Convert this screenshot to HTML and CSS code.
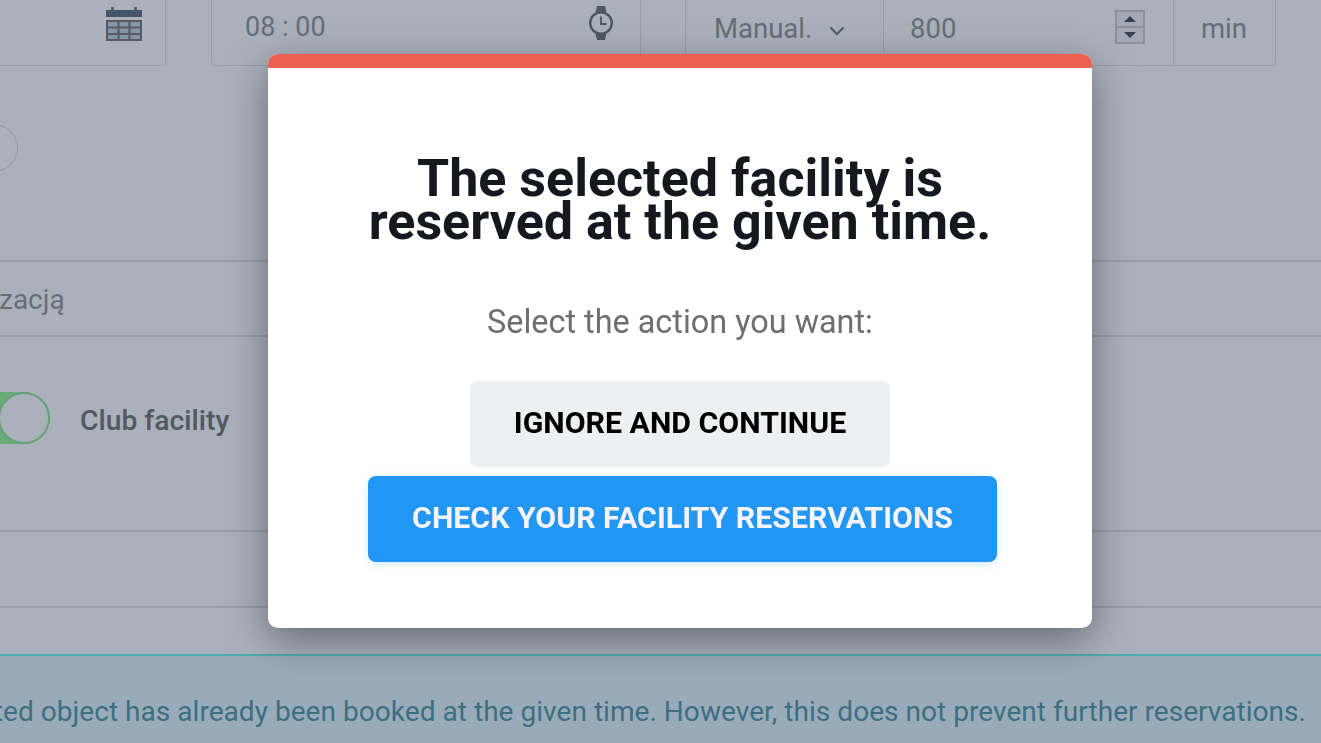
FILE: index.html
```html
<!DOCTYPE html>
<html lang="en">
<head>
<meta charset="utf-8">
<title>Facility reservation</title>
<link rel="stylesheet" href="styles.css">
</head>
<body>
<div class="page">
  <div class="toprow">
    <div class="field date-field">
      <svg class="icon-cal" viewBox="0 0 36 34" width="36" height="34" aria-hidden="true">
        <rect x="5" y="0" width="3" height="6" fill="#7a6a5e"/>
        <rect x="28" y="0" width="3" height="6" fill="#7a6a5e"/>
        <rect x="0" y="3" width="36" height="7" fill="#48596a"/>
        <path d="M1 14h34v19H1z" fill="#b9cfe0" stroke="#6b6560" stroke-width="2"/>
        <path d="M1 20.5h34M1 27h34M12.5 14v19M23.5 14v19" stroke="#6b6560" stroke-width="2.2" fill="none"/>
      </svg>
    </div>
    <div class="field group">
      <div class="cell time-cell">
        <span>08 : 00</span>
        <svg class="icon-watch" viewBox="0 0 26 36" width="26" height="36" aria-hidden="true">
          <path d="M7.5 7.2L9 1h8l1.500 6.200zM7.500 28.800L9 35h8l1.500-6.200z" fill="#595b5d"/>
          <circle cx="13" cy="18" r="10.800" fill="none" stroke="#595b5d" stroke-width="2.400"/>
          <path d="M13 11.500V19h5.500" fill="none" stroke="#595b5d" stroke-width="1.800"/>
        </svg>
      </div>
      <div class="cell spacer-cell"></div>
      <div class="cell manual-cell">
        <span>Manual.</span>
        <svg class="icon-chev" viewBox="0 0 16 10" width="16" height="10" aria-hidden="true">
          <path d="M1.500 1.500L8 8l6.500-6.500" fill="none" stroke="#59626c" stroke-width="2"/>
        </svg>
      </div>
      <div class="cell number-cell">
        <span>800</span>
        <div class="stepper">
          <div class="step"><i class="arrow-up"></i></div>
          <div class="step"><i class="arrow-down"></i></div>
        </div>
      </div>
      <div class="cell unit-cell"><span>min</span></div>
    </div>
  </div>

  <div class="row row-circle"><div class="circle"></div></div>
  <div class="row row-text"><span>zacją</span></div>
  <div class="row row-toggle">
    <div class="toggle"><div class="knob"></div></div>
    <span class="toggle-label">Club facility</span>
  </div>
  <div class="row row-empty"></div>
  <div class="row-last"></div>
  <div class="info"><span>The selected object has already been booked at the given time. However, this does not prevent further reservations.</span></div>
</div>

<div class="overlay">
  <div class="modal">
    <div class="modal-bar"></div>
    <div class="modal-body">
      <h1 class="modal-title">The selected facility is<br>reserved at the given time.</h1>
      <p class="modal-sub">Select the action you want:</p>
      <button class="btn btn-ignore" type="button">IGNORE AND CONTINUE</button>
      <button class="btn btn-check" type="button">CHECK YOUR FACILITY RESERVATIONS</button>
    </div>
  </div>
</div>
</body>
</html>
```

FILE: styles.css
```css
* { box-sizing: border-box; }
html, body { margin: 0; padding: 0; height: 100%; overflow: hidden; }
body { font-family: Roboto, "Liberation Sans", sans-serif; color: #848886; background: #fff; }

.page { height: 743px; width: 1321px; display: flex; flex-direction: column; overflow: hidden; }

.toprow { display: flex; gap: 45px; height: 66px; flex: none; }
.field { border: 1px solid #dcdcdc; border-top: 0; border-radius: 0 0 5px 5px; height: 66px; }
.date-field { width: 177px; margin-left: -11px; display: flex; justify-content: flex-end; padding: 7px 23px 0 0; }
.icon-cal { display: block; }
.group { width: 1065px; display: flex; }
.cell { display: flex; align-items: center; height: 100%; font-size: 27.5px; border-right: 1px solid #dcdcdc; }
.cell:last-child { border-right: 0; }
.time-cell { width: 429px; padding: 0 26px 12px 33px; justify-content: space-between; font-size: 27px; }
.spacer-cell { width: 45px; }
.manual-cell { width: 198px; padding: 0 0 8px 28px; gap: 17px; }
.number-cell { width: 290px; padding: 0 28px 8px 26px; justify-content: space-between; }
.unit-cell { flex: 1; padding: 0 0 8px 27px; }
.icon-watch { display: block; margin-bottom: 8px; }
.icon-chev { display: block; margin-top: 4px; }

.stepper { width: 30px; height: 34px; margin-bottom: 4px; border: 2px solid #c6c6c6; display: flex; flex-direction: column; gap: 2px; background: #c6c6c6; }
.step { flex: 1; display: flex; align-items: center; justify-content: center; background: #f0f0f0; }
.arrow-up { border: 6px solid transparent; border-top: 0; border-bottom: 6px solid #2f3345; }
.arrow-down { border: 6px solid transparent; border-bottom: 0; border-top: 6px solid #2f3345; }

.row { flex: none; border-bottom: 2px solid #dcdcdc; display: flex; align-items: flex-start; }
.row-circle { height: 196px; padding-top: 58px; }
.circle { width: 48px; height: 48px; border: 1px solid #d4d4d4; border-radius: 50%; margin-left: -30px; }
.row-text { height: 75px; font-size: 28px; padding-top: 21px; }
.row-text span { margin-left: -1px; }
.row-toggle { height: 195px; padding-top: 55px; align-items: flex-start; }
.toggle { width: 80px; height: 52px; margin-left: -30px; border-radius: 26px; background: #88f287; display: flex; justify-content: flex-end; }
.knob { width: 52px; height: 52px; border-radius: 50%; background: #fff; border: 2px solid #88e088; }
.toggle-label { margin-left: 30px; font-size: 28.3px; font-weight: 500; color: #5f5f5f; line-height: 58px; }
.row-empty { height: 76px; }
.row-last { height: 46px; flex: none; }

.info { flex: 1; background: #e1f5fd; border-top: 2px solid #5bf2eb; display: flex; justify-content: flex-end; padding: 39px 15px 0 0; font-size: 28.1px; color: #388895; white-space: nowrap; }

.overlay { position: fixed; inset: 0; background: rgba(66, 83, 103, .45); padding: 54px 0 0 268px; }
.modal { width: 824px; height: 574px; background: #fff; border-radius: 10px; overflow: hidden; display: flex; flex-direction: column; box-shadow: 0 12px 40px rgba(30, 35, 45, .5); position: relative; }
.modal-bar { height: 14px; flex: none; background: #ec6052; }
.modal-body { display: flex; flex-direction: column; align-items: center; padding-top: 89px; }
.modal-title { margin: 0; font-size: 52px; line-height: 43px; font-weight: 700; color: #15191f; text-align: center; white-space: nowrap; }
.modal-sub { margin: 61px 0 0; height: 36px; line-height: 36px; font-size: 32.4px; color: #6e6e6e; }
.btn { border: 0; font-family: inherit; font-weight: 700; font-size: 30.3px; border-radius: 8px; height: 86px; padding: 0 0 4px; }
.btn-ignore { margin-top: 41px; width: 420px; background: #ecf0f1; color: #000; }
.btn-check { margin-top: 9px; margin-left: 5px; width: 629px; background: #2196f3; color: #f6f3fb; box-shadow: 0 2px 8px rgba(33, 150, 243, .2); }
```
